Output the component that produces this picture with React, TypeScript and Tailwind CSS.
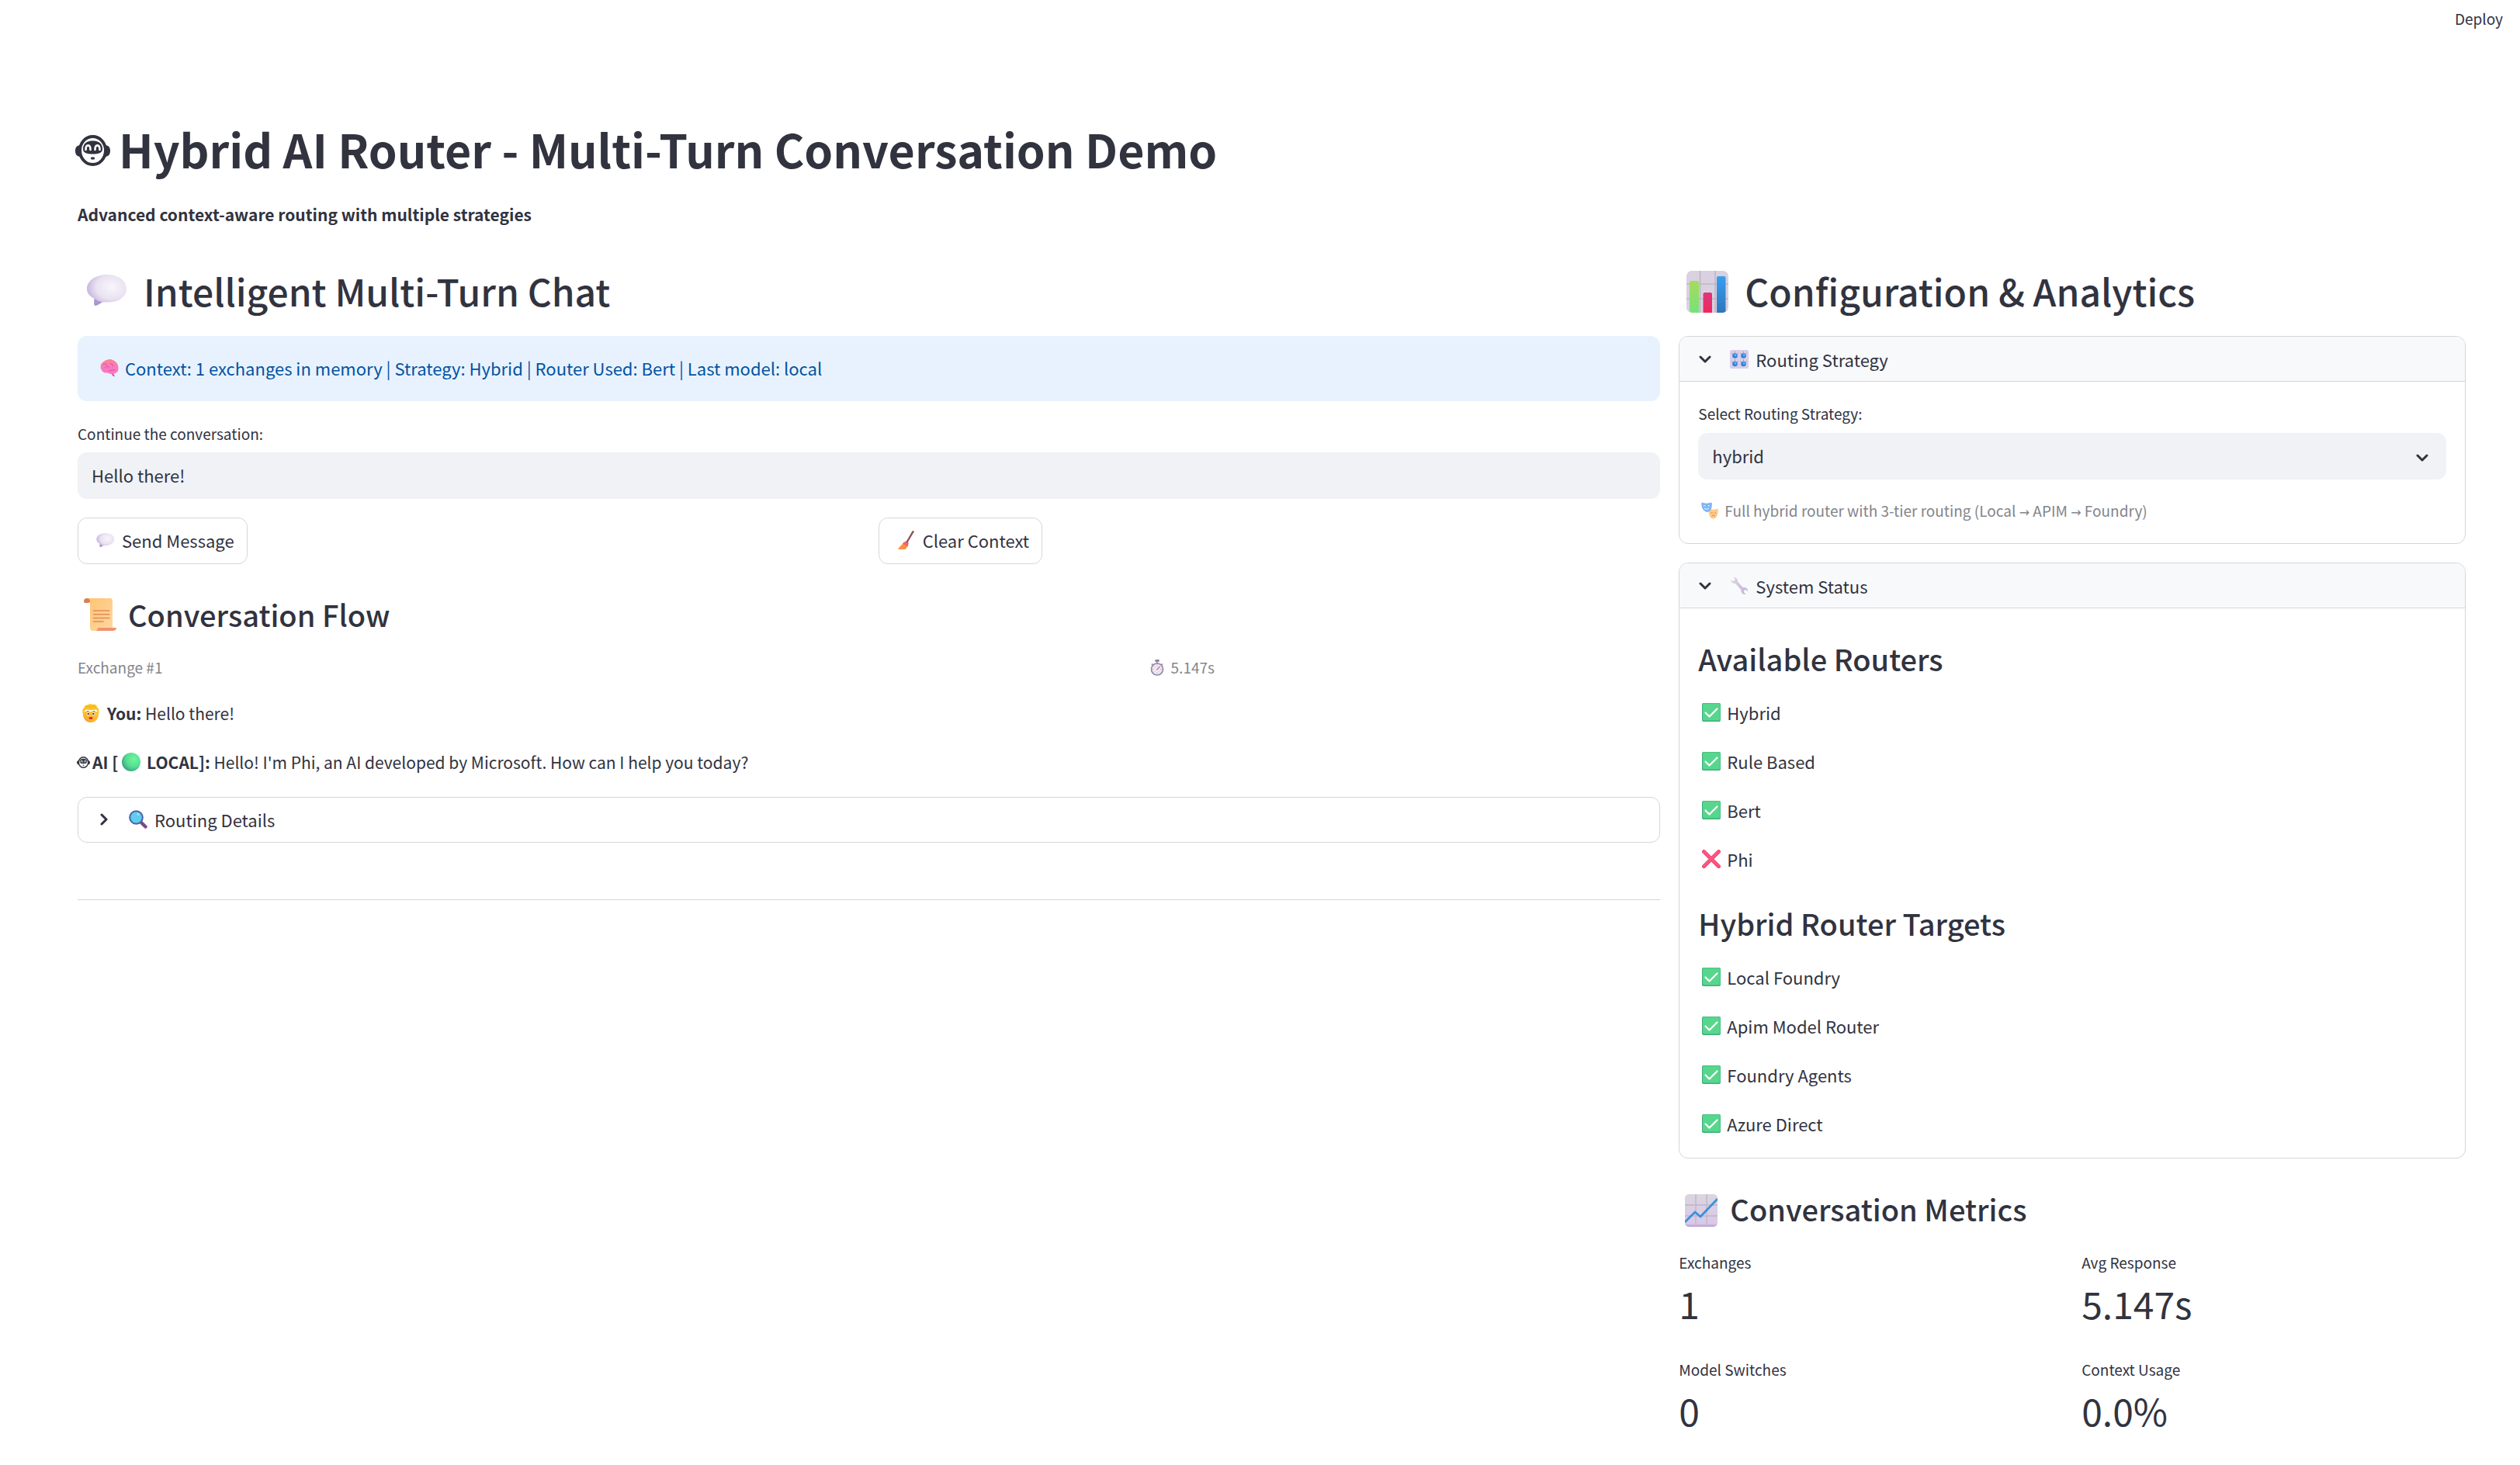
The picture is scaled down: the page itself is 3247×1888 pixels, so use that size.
import React from "react";

type IconProps = { className?: string };

function RobotIcon({ className }: IconProps) {
  return (
    <svg viewBox="0 0 45 40" className={className} aria-hidden="true">
      <path d="M6 13 C1 14 0 17 0 20 C0 24 1 27 6 28 Z M39 13 C44 14 45 17 45 20 C45 24 44 27 39 28 Z" fill="#31333f" />
      <ellipse cx="22.500" cy="20" rx="16.500" ry="18" fill="none" stroke="#31333f" strokeWidth="4" />
      <path d="M10 18 C10 10 16 7.500 22.500 7.500 C29 7.500 35 10 35 18 C35 23 30 24.500 22.500 24.500 C15 24.500 10 23 10 18 Z" fill="#31333f" />
      <path d="M13.500 19 C13.500 11.500 19.500 11.500 19.500 19 M25.500 19 C25.500 11.500 31.500 11.500 31.500 19" fill="none" stroke="#fff" strokeWidth="2.600" strokeLinecap="round" />
      <rect x="20" y="28.500" width="5" height="3" rx="1" fill="#31333f" />
    </svg>
  );
}

function BubbleIcon({ className }: IconProps) {
  return (
    <svg viewBox="0 0 52 40" className={className} aria-hidden="true">
      <defs>
        <radialGradient id="bubble" cx="0.62" cy="0.4" r="0.65">
          <stop offset="0" stopColor="#f8f5fb" />
          <stop offset="0.6" stopColor="#e9e2f1" />
          <stop offset="1" stopColor="#c3b1dd" />
        </radialGradient>
      </defs>
      <path d="M26 0 C41 0 51 8 51 18 C51 28 41 35 29 35.500 H20 C17 37 13 40 10 40 C9 38 9.500 34 9.500 31 C4 28 0 24 0 18 C0 8 11 0 26 0 Z" fill="url(#bubble)" />
      <path d="M9.500 31 C9.500 34 9 38 10 40 C13 40 17 37 20 35.500 C16 35 12 33 9.500 31 Z" fill="#a994d3" />
    </svg>
  );
}

function BarChartIcon({ className }: IconProps) {
  return (
    <svg viewBox="0 0 54 54" className={className} aria-hidden="true">
      <defs>
        <linearGradient id="barGreen" x1="0" y1="0" x2="0" y2="1"><stop offset="0" stopColor="#a5dc5c" /><stop offset="1" stopColor="#79e07c" /></linearGradient>
        <linearGradient id="barRed" x1="0" y1="0" x2="0" y2="1"><stop offset="0" stopColor="#e0347c" /><stop offset="1" stopColor="#ee2a5e" /></linearGradient>
        <linearGradient id="barBlue" x1="0" y1="0" x2="0" y2="1"><stop offset="0" stopColor="#379ff0" /><stop offset="1" stopColor="#2f75bd" /></linearGradient>
      </defs>
      <rect width="54" height="54" rx="7" fill="#d9d1e0" />
      <path d="M17.500 0 V54 M37 0 V54 M0 17 H54 M0 36 H54" stroke="#bdb6c4" strokeWidth="1.600" />
      <path d="M4 15 Q4 13 6 13 H14 Q16 13 16 15 V54 H7 Q4 54 4 50 Z" fill="url(#barGreen)" />
      <path d="M21.500 30 Q21.500 28 23.500 28 H31 Q33 28 33 30 V54 H21.500 Z" fill="url(#barRed)" />
      <path d="M39 9 Q39 7 41 7 H48.500 Q50.500 7 50.500 9 V52 Q49 54 47 54 H39 Z" fill="url(#barBlue)" />
    </svg>
  );
}

function LineChartIcon({ className }: IconProps) {
  return (
    <svg viewBox="0 0 42 42" className={className} aria-hidden="true">
      <defs>
        <linearGradient id="paper" x1="0" y1="0" x2="0" y2="1"><stop offset="0" stopColor="#dad6df" /><stop offset="0.900" stopColor="#d9c8e8" /><stop offset="1" stopColor="#b79ad0" /></linearGradient>
      </defs>
      <rect width="42" height="42" rx="5" fill="url(#paper)" />
      <path d="M14 0 V42 M28 0 V42 M0 14 H42 M0 28 H42" stroke="#bfb7c7" strokeWidth="1.400" />
      <path d="M0 36 L13 23 L20 29 L42 6" fill="none" stroke="#3692dd" strokeWidth="2.800" strokeLinejoin="round" />
    </svg>
  );
}

function BrainIcon({ className }: IconProps) {
  return (
    <svg viewBox="0 0 24 22" className={className} aria-hidden="true">
      <path d="M16 17 L19 22 L17 22 L13 17 Z" fill="#e0458f" />
      <path d="M5 3 C8 0 14 -0.500 17 1.500 C21 3 24 8 23.500 12 C23.500 16 21 18 18 18.500 C15 19.500 12 19 10 17.500 C7 18 3 17 2 14 C-0.500 11 0 5 5 3 Z" fill="#fb79c0" />
      <path d="M5 3 C8 0 14 -0.500 17 1.500 C20 3 22 5 23 8 C18 6 9 5 2 9 C1 7 3 4 5 3 Z" fill="#f98494" opacity="0.800" />
      <path d="M6 11 C8 8 11 9 12 11 M13 6 C15 5 17 7 16 9 M11 15 C14 15 16 13 19 14 M4 7 C6 5 8 6 9 7" stroke="#dd4a9c" fill="none" strokeLinecap="round" />
    </svg>
  );
}

function BroomIcon({ className }: IconProps) {
  return (
    <svg viewBox="0 0 21 24" className={className} aria-hidden="true">
      <path d="M19.500 1.200 L11 15.500" stroke="#8a5358" strokeWidth="2.400" strokeLinecap="round" />
      <path d="M8 14.500 C11 14 13.500 16 13 18.500 C12 21 11 23 9.500 24 H0.500 C0 23 0.500 22.500 1.500 21.500 Z" fill="#fb9a45" />
      <path d="M8 14.500 L13.500 18 L12.500 20.500 L6 16.500 Z" fill="#f7605b" />
      <path d="M9.500 14 L13.500 16.500" stroke="#b45a8d" strokeWidth="1.600" />
      <path d="M3 23.500 L8 18.500 M7 23.500 L10 20" stroke="#f2706a" />
    </svg>
  );
}

function ScrollIcon({ className }: IconProps) {
  return (
    <svg viewBox="0 0 42 42" className={className} aria-hidden="true">
      <defs>
        <linearGradient id="scroll" x1="0" y1="0" x2="1" y2="1"><stop offset="0" stopColor="#ffc36f" /><stop offset="1" stopColor="#ffd7a2" /></linearGradient>
      </defs>
      <path d="M3 0 H34 Q37 0 37 4 V38 L34 42 H12 Q8 42 8 37 V5 Z" fill="url(#scroll)" />
      <path d="M0 4 Q0 0 4 0 Q8 0 8 5 L6 6 H1.500 Q0 6 0 4 Z" fill="#d97f54" />
      <path d="M18 38 H42 Q42 42 37 42 H14 Q18 42 18 38 Z" fill="#f0936e" />
      <path d="M12.500 16 H33 M12.500 20.800 H33 M12.500 25.500 H33 M12.500 30 H25" stroke="#e2895a" strokeWidth="1.600" strokeLinecap="round" />
    </svg>
  );
}

function StopwatchIcon({ className }: IconProps) {
  return (
    <svg viewBox="0 0 18 21" className={className} aria-hidden="true">
      <rect x="6.300" y="0" width="5.400" height="3" rx="0.800" fill="#907f9f" />
      <path d="M9 2 V6 M2 5.500 L3.500 7 M16 5.500 L14.500 7" stroke="#a598b2" strokeWidth="2" />
      <circle cx="9" cy="12.500" r="7.500" fill="#eeeaf4" stroke="#9488a8" strokeWidth="1.700" />
      <path d="M9 7 V8.500 M9 16.500 V18 M3.500 12.500 H5 M13 12.500 H14.500 M5.300 8.700 L6.200 9.600 M5.300 16.300 L6.200 15.400 M12.700 16.300 L11.800 15.400" stroke="#b7aec4" />
      <path d="M8.700 12.900 L12.300 9.200" stroke="#ec6d9d" strokeWidth="1.500" strokeLinecap="round" />
    </svg>
  );
}

function PersonIcon({ className }: IconProps) {
  return (
    <svg viewBox="0 0 22 24" className={className} aria-hidden="true">
      <defs>
        <linearGradient id="skin" x1="0" y1="1" x2="1" y2="0"><stop offset="0" stopColor="#ef8f3c" /><stop offset="0.450" stopColor="#fdb92e" /><stop offset="1" stopColor="#ffc93c" /></linearGradient>
      </defs>
      <path d="M1 10 H21 C22 18 18 24 11 24 C4 24 0 18 1 10 Z" fill="url(#skin)" />
      <path d="M1 13 C-0.500 9 0.500 6 2.500 5 C2.500 2.500 5 1 7 1.500 C9 -0.500 12 0 13 1 C16 0 18.500 1.500 19 4 C21.500 6 22 9.500 21 13 C20.500 9.500 19 8 17 7.500 C14 8.500 9 8.500 6 7.500 C3.500 8 1.500 10 1 13 Z" fill="#fdc41d" />
      <path d="M4.500 4.500 Q8 2.500 11 4.500 M12 3 Q15 2.500 17 5" stroke="#f0a41c" strokeWidth="0.800" fill="none" />
      <path d="M5.500 10 Q7 9 8.500 9.800 M13.500 9.800 Q15 9 16.500 10" stroke="#b86f1b" fill="none" />
      <circle cx="7.500" cy="13" r="1.900" fill="#fff" />
      <circle cx="14.500" cy="13" r="1.900" fill="#fff" />
      <circle cx="7.700" cy="13" r="1.200" fill="#503450" />
      <circle cx="14.300" cy="13" r="1.200" fill="#503450" />
      <ellipse cx="11" cy="18.500" rx="2.600" ry="1.400" fill="#d9263f" />
    </svg>
  );
}

function GreenCircleIcon({ className }: IconProps) {
  return (
    <svg viewBox="0 0 24 24" className={className} aria-hidden="true">
      <defs>
        <radialGradient id="orb" cx="0.650" cy="0.350" r="0.700"><stop offset="0" stopColor="#6cf79d" /><stop offset="0.600" stopColor="#55dd92" /><stop offset="1" stopColor="#3ba283" /></radialGradient>
      </defs>
      <circle cx="12" cy="12" r="12" fill="url(#orb)" />
    </svg>
  );
}

function MagnifierIcon({ className }: IconProps) {
  return (
    <svg viewBox="0 0 24 24" className={className} aria-hidden="true">
      <path d="M15.500 15.500 L21.500 21.500" stroke="#7c4a86" strokeWidth="4.400" strokeLinecap="round" />
      <circle cx="9.500" cy="9.500" r="8.300" fill="#60cdee" stroke="#4a5fa5" strokeWidth="2" />
      <circle cx="12" cy="5.500" r="1.500" fill="#a5e5f8" />
    </svg>
  );
}

function KnobsIcon({ className }: IconProps) {
  return (
    <svg viewBox="0 0 24 24" className={className} aria-hidden="true">
      <rect width="24" height="24" rx="2" fill="#d9cdea" />
      {[6.5, 17.5].map((x) =>
        [7.5, 18].map((y) => (
          <g key={`${x}-${y}`}>
            <path d={`M${x - 4} ${y - 3.5} l1.200 1.200 M${x} ${y - 5.5} v1.500 M${x + 4} ${y - 3.5} l-1.200 1.200`} stroke="#8a8199" strokeWidth="0.900" />
            <circle cx={x} cy={y} r="3.300" fill="#2f86d8" />
            <circle cx={x + 0.6} cy={y - 0.8} r="1" fill="#a9cdee" />
          </g>
        )),
      )}
    </svg>
  );
}

function WrenchIcon({ className }: IconProps) {
  return (
    <svg viewBox="0 0 24 24" className={className} aria-hidden="true">
      <defs>
        <linearGradient id="steel" x1="0" y1="0" x2="1" y2="1"><stop offset="0" stopColor="#dcdade" /><stop offset="1" stopColor="#c3aedd" /></linearGradient>
      </defs>
      <path d="M5 1 C8 0.500 10.500 3 9.800 6.300 L16.800 14.200 C20 13.300 23.500 15.500 23 19 L20.500 17 L18.200 17.800 L17.800 20.200 L20.300 22.800 C17 23.800 13.800 21 14.600 17.600 L7.300 9 C4 9.500 0.800 7 1.200 3.800 L3.500 5.900 L5.900 5.400 L6.500 3.200 Z" fill="url(#steel)" />
    </svg>
  );
}

function MasksIcon({ className }: IconProps) {
  return (
    <svg viewBox="0 0 22 22" className={className} aria-hidden="true">
      <path d="M10 8.500 C14 10 18 10 21.500 8.500 C22.500 14 20.500 21 15.500 21.800 C11 21 9 16 10 8.500 Z" fill="#ffcb84" />
      <path d="M0.500 0.500 C5 2 9 2 13.500 0.500 C14.500 6 13 12 8 13 C2.500 12 -0.500 6 0.500 0.500 Z" fill="#7db4f4" />
      <path d="M3 5 Q4.300 4 5.500 5 M8.500 5 Q9.800 4 11 5 M4 8 Q7 11 10 8" stroke="#fff" fill="none" />
      <path d="M12.500 14 H14.500 M17 14 H19 M13.500 18.300 Q15.700 15.500 18 18.300" stroke="#d9824c" fill="none" />
    </svg>
  );
}

function CheckIcon({ className }: IconProps) {
  return (
    <svg viewBox="0 0 24 24" className={className} aria-hidden="true">
      <rect width="24" height="24" rx="2" fill="#3fae7c" />
      <rect x="1" y="0.500" width="22.500" height="22" rx="1.800" fill="#57d68d" />
      <path d="M4.500 12.500 L9.500 17.500 L19.500 7.500" fill="none" stroke="#fff" strokeWidth="2.200" strokeLinecap="round" strokeLinejoin="round" />
    </svg>
  );
}

function CrossIcon({ className }: IconProps) {
  return (
    <svg viewBox="0 0 24 24" className={className} aria-hidden="true">
      <path d="M2.500 2.500 L21.500 21.500 M21.500 2.500 L2.500 21.500" stroke="#e63f68" strokeWidth="4.800" strokeLinecap="round" />
      <path d="M2.500 2.200 L21.500 21 M21.500 2.200 L2.500 21" stroke="#ff5580" strokeWidth="3.400" strokeLinecap="round" />
    </svg>
  );
}

function Chevron({ className }: IconProps) {
  return (
    <svg viewBox="0 0 16 10" className={className} aria-hidden="true">
      <path d="M2 2 L8 8 L14 2" fill="none" stroke="#31333f" strokeWidth="3" strokeLinecap="round" strokeLinejoin="round" />
    </svg>
  );
}

function Arrow() {
  return <span className="font-['DejaVu_Sans',sans-serif] text-[16px] leading-none">→</span>;
}

function StatusList({ items }: { items: { name: string; ok: boolean }[] }) {
  return (
    <ul className="mt-[25px] flex flex-col gap-[25px] pl-[5px]">
      {items.map((item) => (
        <li key={item.name} className="flex items-center gap-2">
          {item.ok ? <CheckIcon className="size-6" /> : <CrossIcon className="size-6" />}
          {item.name}
        </li>
      ))}
    </ul>
  );
}

function Panel({ icon, title, children }: { icon: React.ReactNode; title: string; children: React.ReactNode }) {
  return (
    <details open className="overflow-hidden rounded-xl border border-[#d6d6d9]">
      <summary className="flex h-[58px] cursor-pointer list-none items-center border-b border-[#d6d6d9] bg-[#f8f9fb] pl-[25px]">
        <Chevron className="mr-6 h-[10px] w-4" />
        {icon}
        <span className="ml-[9px]">{title}</span>
      </summary>
      <div className="px-6">{children}</div>
    </details>
  );
}

function Metric({ label, value }: { label: string; value: string }) {
  return (
    <div>
      <dt className="text-[19px] leading-[30px]">{label}</dt>
      <dd className="mt-[7px] text-5xl leading-[60px]">{value}</dd>
    </div>
  );
}

export default function App() {
  return (
    <div className="min-h-screen bg-white font-['Noto_Sans_CJK_SC','Noto_Sans',sans-serif] text-[22px] leading-[38px] text-[#31333f]">
      <header className="flex h-12 items-center justify-end pr-[22px]">
        <button type="button" className="text-[19px] leading-[30px]">Deploy</button>
      </header>

      <main className="pt-[104px] pr-[70px] pb-10 pl-[100px]">
        <h1 className="-ml-[3px] flex items-center gap-[11px] text-[59px] leading-[80px] font-bold">
          <RobotIcon className="mt-1 h-10 w-[45px]" />
          Hybrid AI Router - Multi-Turn Conversation Demo
        </h1>
        <p className="mt-[25px] text-[21px] font-semibold">Advanced context-aware routing with multiple strategies</p>

        <div className="mt-[46px] flex gap-6">
          <section className="min-w-0 grow basis-[calc(66.6667%-24px)]">
            <h2 className="flex items-center gap-[21px] pl-3 text-5xl leading-[66px] font-medium">
              <BubbleIcon className="h-10 w-[52px]" />
              Intelligent Multi-Turn Chat
            </h2>

            <div role="status" className="mt-[26px] flex items-center gap-2 rounded-xl bg-[#e8f2ff] pt-[22px] pr-6 pb-6 pl-[29px] text-[#0054a3]">
              <BrainIcon className="h-[22px] w-6" />
              Context: 1 exchanges in memory | Strategy: Hybrid | Router Used: Bert | Last model: local
            </div>

            <label htmlFor="message" className="mt-[27px] block text-[19px] leading-[30px]">Continue the conversation:</label>
            <input id="message" type="text" defaultValue="Hello there!" className="mt-[9px] block h-[60px] w-full rounded-xl bg-[#f0f2f6] px-[18px] pb-[2px]" />

            <div className="mt-6 grid grid-cols-2 gap-6">
              <div>
                <button type="button" className="flex h-[60px] items-center gap-[9px] rounded-xl border border-[#d6d6d9] pr-4 pb-[2px] pl-[23px]">
                  <BubbleIcon className="h-[18px] w-6" />
                  Send Message
                </button>
              </div>
              <div>
                <button type="button" className="flex h-[60px] items-center gap-[11px] rounded-xl border border-[#d6d6d9] pr-4 pb-[2px] pl-6">
                  <BroomIcon className="h-6 w-[21px]" />
                  Clear Context
                </button>
              </div>
            </div>

            <h3 className="mt-10 flex items-center gap-[15px] pl-2 text-[38px] leading-[50px] font-medium">
              <ScrollIcon className="size-[42px]" />
              Conversation Flow
            </h3>

            <div className="mt-7 flex gap-6 text-[19px] leading-[30px] text-[#83858c]">
              <div className="grow basis-[calc(66.6667%-24px)]">Exchange #1</div>
              <div className="flex grow basis-[calc(33.3333%-24px)] items-center gap-[9px] pl-[10px]">
                <StopwatchIcon className="h-[21px] w-[18px]" />
                5.147s
              </div>
            </div>

            <p className="mt-[25px] flex items-center pl-[6px] text-[21px]">
              <PersonIcon className="mr-[10px] h-6 w-[22px]" />
              <span><strong className="font-semibold">You:</strong> Hello there!</span>
            </p>
            <p className="-ml-px mt-[25px] flex items-center text-[21px]">
              <RobotIcon className="mr-[3px] h-[15px] w-[17px]" />
              <strong className="font-semibold">AI [</strong>
              <GreenCircleIcon className="mr-2 ml-[5px] size-6" />
              <span><strong className="font-semibold">LOCAL]:</strong> Hello! I'm Phi, an AI developed by Microsoft. How can I help you today?</span>
            </p>

            <details className="mt-[26px] rounded-xl border border-[#d6d6d9]">
              <summary className="flex h-[57px] cursor-pointer list-none items-center pb-[2px] pl-[25px]">
                <Chevron className="mr-6 h-[10px] w-4 -rotate-90" />
                <MagnifierIcon className="size-6" />
                <span className="ml-[9px]">Routing Details</span>
              </summary>
            </details>

            <hr className="mt-[73px] border-[#d6d6d9]" />
          </section>

          <aside className="min-w-0 grow basis-[calc(33.3333%-24px)]">
            <h2 className="flex items-center gap-[21px] pl-[10px] text-5xl leading-[66px] font-medium">
              <BarChartIcon className="mt-1 size-[54px]" />
              Configuration &amp; Analytics
            </h2>

            <div className="mt-[26px] flex flex-col gap-6">
              <Panel icon={<KnobsIcon className="size-6" />} title="Routing Strategy">
                <label htmlFor="strategy" className="block pt-[26px] text-[19px] leading-[30px]">Select Routing Strategy:</label>
                <div className="relative mt-[10px]">
                  <select id="strategy" defaultValue="hybrid" className="block h-[60px] w-full appearance-none rounded-xl bg-[#f0f2f6] px-[18px] pb-[2px]">
                    <option value="hybrid">hybrid</option>
                  </select>
                  <Chevron className="pointer-events-none absolute top-[27px] right-[23px] h-[10px] w-4" />
                </div>
                <p className="mt-[25px] flex items-center gap-2 pb-[27px] pl-1 text-[19px] leading-[30px] text-[#83858c]">
                  <MasksIcon className="size-[22px]" />
                  <span>
                    Full hybrid router with 3-tier routing (Local <Arrow /> APIM <Arrow /> Foundry)
                  </span>
                </p>
              </Panel>

              <Panel icon={<WrenchIcon className="size-6" />} title="System Status">
                <h3 className="pt-10 text-[38px] leading-[50px] font-medium">Available Routers</h3>
                <StatusList
                  items={[
                    { name: "Hybrid", ok: true },
                    { name: "Rule Based", ok: true },
                    { name: "Bert", ok: true },
                    { name: "Phi", ok: false },
                  ]}
                />
                <h3 className="mt-[39px] text-[38px] leading-[50px] font-medium">Hybrid Router Targets</h3>
                <div className="pb-[25px]">
                  <StatusList
                    items={[
                      { name: "Local Foundry", ok: true },
                      { name: "Apim Model Router", ok: true },
                      { name: "Foundry Agents", ok: true },
                      { name: "Azure Direct", ok: true },
                    ]}
                  />
                </div>
              </Panel>
            </div>

            <h3 className="mt-10 flex items-center gap-4 pl-2 text-[38px] leading-[50px] font-medium">
              <LineChartIcon className="mt-1 size-[42px]" />
              Conversation Metrics
            </h3>
            <dl className="mt-[29px] grid grid-cols-2 gap-x-6 gap-y-[41px]">
              <Metric label="Exchanges" value="1" />
              <Metric label="Avg Response" value="5.147s" />
              <Metric label="Model Switches" value="0" />
              <Metric label="Context Usage" value="0.0%" />
            </dl>
          </aside>
        </div>
      </main>
    </div>
  );
}
